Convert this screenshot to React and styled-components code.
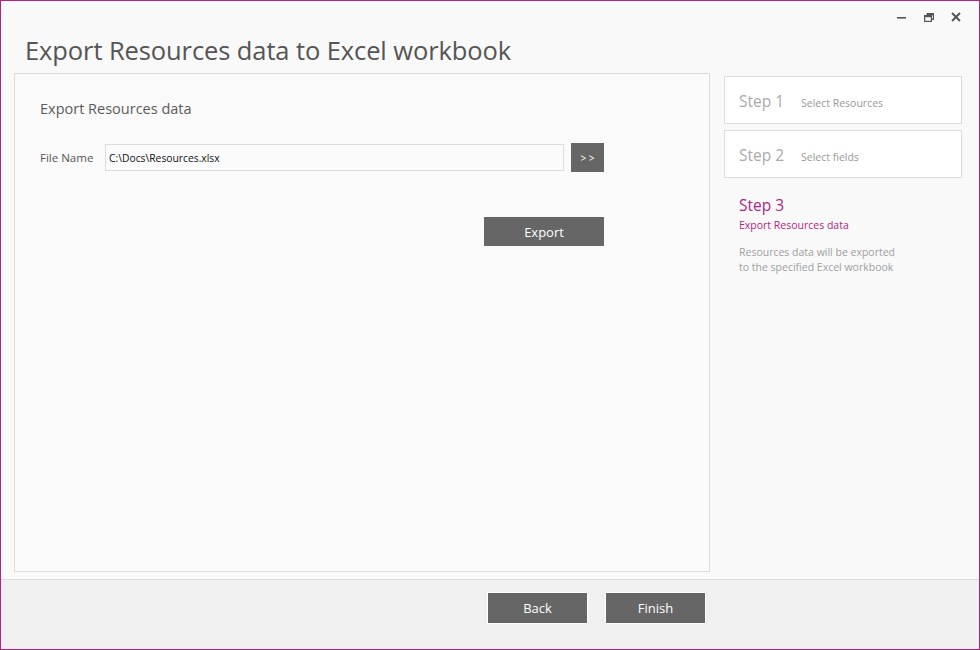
import React from "react";
import styled, { createGlobalStyle } from "styled-components";

const Global = createGlobalStyle`
  html, body { margin: 0; padding: 0; background: #f9f9f9; }
  * { box-sizing: border-box; }
`;

const FONT = `"Open Sans", "Noto Sans", "Liberation Sans", sans-serif`;

const Window = styled.div`
  width: 980px;
  height: 650px;
  border: 1px solid #b4237f;
  background: #f9f9f9;
  display: flex;
  flex-direction: column;
  font-family: ${FONT};
  color: #555;
`;

const TopBar = styled.div`
  height: 32px;
  display: flex;
  justify-content: flex-end;
  align-items: center;
  padding-right: 14px;
  gap: 8px;
`;

const CtrlButton = styled.div`
  width: 19px;
  height: 19px;
  display: flex;
  align-items: center;
  justify-content: center;
  color: #555;
`;

const Title = styled.h1`
  margin: 0;
  padding-left: 24px;
  height: 40px;
  font-size: 25.5px;
  font-weight: 400;
  line-height: 34px;
  color: #555;
  letter-spacing: -0.1px;
`;

const Body = styled.div`
  flex: 1;
  display: flex;
  gap: 14px;
  padding: 0 17px 7px 13px;
`;

const MainPanel = styled.section`
  width: 696px;
  border: 1px solid #dcdcdc;
  background: #fafafa;
  padding: 23px 25px;
`;

const Heading = styled.div`
  font-size: 14.5px;
  color: #5a5a5a;
  line-height: 24px;
  margin-bottom: 22px;
`;

const FieldRow = styled.div`
  display: flex;
  align-items: center;
  width: 564px;
`;

const Label = styled.label`
  width: 65px;
  font-size: 11.5px;
  color: #555;
`;

const Input = styled.div`
  width: 459px;
  height: 27px;
  border: 1px solid #dcdcdc;
  background: #fbfbfb;
  font-size: 10.3px;
  color: #111;
  display: flex;
  align-items: center;
  padding-left: 3px;
  margin-right: 7px;
`;

const DarkButton = styled.button`
  width: ${(p) => p.$w}px;
  height: ${(p) => p.$h}px;
  flex-shrink: 0;
  background: #666;
  color: #fff;
  border: ${(p) => (p.$outlined ? "1px solid #fff" : "none")};
  font-family: ${FONT};
  font-size: ${(p) => p.$fs || 13}px;
  padding: 0;
  display: flex;
  align-items: center;
  justify-content: center;
  cursor: pointer;
`;

const ExportRow = styled.div`
  display: flex;
  justify-content: flex-end;
  width: 564px;
  margin-top: 45px;
`;

const Side = styled.aside`
  width: 238px;
  display: flex;
  flex-direction: column;
  gap: 6px;
  padding-top: 3px;
`;

const StepBox = styled.div`
  height: 48px;
  border: 1px solid #dcdcdc;
  background: #fff;
  display: flex;
  align-items: center;
  padding-left: 14px;
`;

const StepNum = styled.span`
  font-size: 15.5px;
  color: ${(p) => (p.$active ? "#b4237f" : "#aaa")};
  width: 62px;
  margin-top: ${(p) => (p.$active ? 0 : 1)}px;
`;

const StepName = styled.span`
  font-size: 10.5px;
  color: #999;
  margin-top: 5px;
`;

const ActiveStep = styled.div`
  padding: 10px 0 0 15px;
  display: flex;
  flex-direction: column;
`;

const ActiveName = styled.div`
  font-size: 10.5px;
  color: #b4237f;
  margin-top: 2px;
`;

const StepDesc = styled.div`
  font-size: 10.5px;
  color: #a0a0a0;
  line-height: 15px;
  margin-top: 13px;
`;

const Footer = styled.footer`
  height: 70px;
  border-top: 1px solid #dcdcdc;
  background: #f0f0f0;
  display: flex;
  justify-content: flex-end;
  align-items: flex-start;
  gap: 17px;
  padding: 12px 273px 0 0;
`;

export default function App() {
  return (
    <>
      <Global />
      <Window>
        <TopBar>
          <CtrlButton>
            <svg width="12" height="12" viewBox="0 0 12 12">
              <rect x="1" y="6" width="9" height="1.6" fill="#555" />
            </svg>
          </CtrlButton>
          <CtrlButton>
            <svg width="12" height="12" viewBox="0 0 12 12" fill="none" stroke="#555" strokeWidth="1.2">
              <rect x="1.6" y="4.6" width="6.8" height="5.8" />
              <line x1="1.6" y1="5.6" x2="8.4" y2="5.6" />
              <path d="M3.6 2.6 H10.4 V8.4 H8.4" />
              <line x1="3.6" y1="3.6" x2="10.4" y2="3.6" />
            </svg>
          </CtrlButton>
          <CtrlButton>
            <svg width="12" height="12" viewBox="0 0 12 12" stroke="#555" strokeWidth="2">
              <line x1="2" y1="2" x2="10" y2="10" />
              <line x1="10" y1="2" x2="2" y2="10" />
            </svg>
          </CtrlButton>
        </TopBar>
        <Title>Export Resources data to Excel workbook</Title>
        <Body>
          <MainPanel>
            <Heading>Export Resources data</Heading>
            <FieldRow>
              <Label>File Name</Label>
              <Input>C:\Docs\Resources.xlsx</Input>
              <DarkButton $w={33} $h={29} $fs={10}>&gt; &gt;</DarkButton>
            </FieldRow>
            <ExportRow>
              <DarkButton $w={120} $h={29}>Export</DarkButton>
            </ExportRow>
          </MainPanel>
          <Side>
            <StepBox>
              <StepNum>Step 1</StepNum>
              <StepName>Select Resources</StepName>
            </StepBox>
            <StepBox>
              <StepNum>Step 2</StepNum>
              <StepName>Select fields</StepName>
            </StepBox>
            <ActiveStep>
              <StepNum $active>Step 3</StepNum>
              <ActiveName>Export Resources data</ActiveName>
              <StepDesc>
                Resources data will be exported
                <br />
                to the specified Excel workbook
              </StepDesc>
            </ActiveStep>
          </Side>
        </Body>
        <Footer>
          <DarkButton $w={101} $h={32} $outlined>Back</DarkButton>
          <DarkButton $w={101} $h={32} $outlined>Finish</DarkButton>
        </Footer>
      </Window>
    </>
  );
}
